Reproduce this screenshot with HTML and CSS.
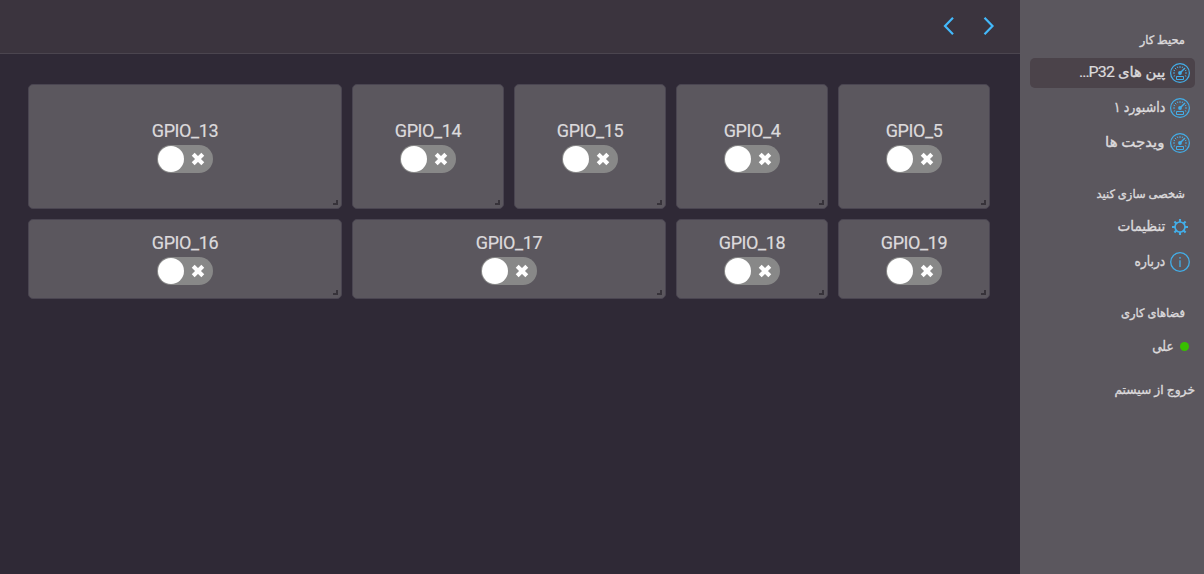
FILE: index.html
```html
<!DOCTYPE html>
<html lang="fa">
<head>
<meta charset="utf-8">
<title>داشبورد</title>
<link rel="stylesheet" href="styles.css">
</head>
<body>
<svg width="0" height="0" class="defs">
  <symbol id="gauge" viewBox="0 0 20 20">
    <g fill="none" stroke="currentColor">
      <circle cx="10" cy="10" r="9.4" stroke-width="1.2"/>
      <path d="M3 10h2M17 10h-2M10 3v2M5 5l1.3 1.3M3.7 13.2l1.4-.5M16.3 13.2l-1.4-.5M3.6 7.2l1.4.6M16.4 7.2l-1.4.6M7.3 3.6l.6 1.4M12.7 3.6l-.6 1.4" stroke-width="1"/>
      <path d="M10.5 9.5L15 5" stroke-width="1.5"/>
      <path d="M6.5 13.5h7v3h-7z" stroke-width="1"/>
    </g>
    <circle cx="10" cy="10" r="1.9" fill="currentColor"/>
  </symbol>
  <symbol id="gear" viewBox="0 0 20 20">
    <circle cx="10" cy="10" r="5" fill="none" stroke="currentColor" stroke-width="1.7"/>
    <path d="M10 2v3M10 15v3M2 10h3M15 10h3M4.4 4.4l2 2M13.6 13.6l2 2M4.4 15.6l2-2M13.6 6.4l2-2" stroke="currentColor" stroke-width="2.1"/>
  </symbol>
  <symbol id="info" viewBox="0 0 20 20">
    <circle cx="10" cy="10" r="9.3" fill="none" stroke="currentColor" stroke-width="1.3"/>
    <path d="M10 5v1.7M10 8.2v6.8" stroke="currentColor" stroke-width="1.3"/>
  </symbol>
  <symbol id="cross" viewBox="0 0 14 14">
    <path d="M2.2 2.2l9.6 9.6M11.8 2.2l-9.6 9.6" stroke="currentColor" stroke-width="4.1"/>
  </symbol>
</svg>
<div class="app">
  <main class="main">
    <header class="topbar">
      <svg class="arrow" viewBox="0 0 20 20"><path d="M14 1.8L6 10l8 8.2"/></svg>
      <svg class="arrow" viewBox="0 0 20 20"><path d="M5.5 1.8l8 8.2-8 8.2"/></svg>
    </header>
    <section class="grid">
      <article class="card wide"><h3>GPIO_13</h3><div class="switch"><svg><use href="#cross"/></svg></div></article>
      <article class="card"><h3>GPIO_14</h3><div class="switch"><svg><use href="#cross"/></svg></div></article>
      <article class="card"><h3>GPIO_15</h3><div class="switch"><svg><use href="#cross"/></svg></div></article>
      <article class="card"><h3>GPIO_4</h3><div class="switch"><svg><use href="#cross"/></svg></div></article>
      <article class="card"><h3>GPIO_5</h3><div class="switch"><svg><use href="#cross"/></svg></div></article>
      <article class="card wide"><h3>GPIO_16</h3><div class="switch"><svg><use href="#cross"/></svg></div></article>
      <article class="card wide"><h3>GPIO_17</h3><div class="switch"><svg><use href="#cross"/></svg></div></article>
      <article class="card"><h3>GPIO_18</h3><div class="switch"><svg><use href="#cross"/></svg></div></article>
      <article class="card"><h3>GPIO_19</h3><div class="switch"><svg><use href="#cross"/></svg></div></article>
    </section>
  </main>
  <aside class="sidebar" dir="rtl">
    <h2 class="title">محیط کار</h2>
    <nav class="menu">
      <a class="item active"><svg><use href="#gauge"/></svg><span class="pins">پین های <span class="latin">P32<span class="dots">...</span></span></span></a>
      <a class="item"><svg><use href="#gauge"/></svg><span class="board">داشبورد ۱</span></a>
      <a class="item"><svg><use href="#gauge"/></svg><span class="widgets">ویدجت ها</span></a>
    </nav>
    <h2 class="title second">شخصی سازی کنید</h2>
    <nav class="menu">
      <a class="item"><svg><use href="#gear"/></svg><span class="settings">تنظیمات</span></a>
      <a class="item"><svg><use href="#info"/></svg><span class="about">درباره</span></a>
    </nav>
    <h2 class="title third">فضاهای کاری</h2>
    <div class="item user"><i class="dot"></i><span class="about">علی</span></div>
    <a class="logout">خروج از سیستم</a>
  </aside>
</div>
</body>
</html>
```
FILE: styles.css
```css
* { box-sizing: border-box; }
body { margin: 0; font-family: Roboto, "DejaVu Sans", sans-serif; color: #dcdadc; background: #2f2936; }
.defs { display: block; position: absolute; }
.app { display: flex; height: 574px; }
.main { flex: 1; background: #2f2936; }
.topbar { height: 54px; background: #3b343e; border-bottom: 1px solid #4b454f; display: flex; justify-content: flex-end; align-items: center; gap: 20px; padding: 0 21px 1px 0; }
.arrow { width: 20px; height: 20px; fill: none; stroke: #43b9fb; stroke-width: 2.2; }
.grid { display: grid; grid-template-columns: repeat(6, 152px); grid-template-rows: 125px 80px; gap: 10px; padding: 30px 0 0 28px; }
.card { position: relative; display: flex; flex-direction: column; align-items: center; justify-content: center; padding-bottom: 2px; background: #5b575e; border: 1px solid #4a4551; border-radius: 5px; }
.wide { grid-column: span 2; }
.card::after { content: ""; box-sizing: border-box; position: absolute; right: 3px; bottom: 3px; width: 5px; height: 5px; border: solid #37333a; border-width: 0 2px 2px 0; }
.card h3 { margin: 0 0 2px; font-size: 18px; line-height: 24px; font-weight: 400; letter-spacing: -.4px; -webkit-text-stroke: .2px currentColor; }
.switch { width: 56px; height: 28px; padding: 1px 8px 1px 1px; border-radius: 14px; background: #888; display: flex; align-items: center; justify-content: space-between; }
.switch::before { content: ""; width: 26px; height: 26px; border-radius: 50%; background: #fff; }
.switch svg { width: 14px; height: 14px; color: #fff; }
.sidebar { width: 184px; background: #5b575e; padding: 30px 9px 0 10px; -webkit-text-stroke: .35px currentColor; }
.title { margin: 0 10px 8px 0; height: 20px; line-height: 20px; font-size: 11.5px; font-weight: 400; white-space: nowrap; }
.second { margin-top: 26px; }
.third { margin-top: 26px; }
.menu { display: flex; flex-direction: column; gap: 5px; }
.item { display: flex; align-items: center; gap: 5px; height: 30px; padding: 0 5px; border-radius: 5px; font-size: 14px; line-height: 28px; white-space: nowrap; }
.item > span { padding-bottom: 2px; transform-origin: right center; }
.pins { transform: scaleX(1.06); }
.board { transform: scaleX(.9); }
.widgets { transform: scaleX(1.07); }
.settings { transform: scaleX(.97); }
.about { transform: scaleX(.87); }
.active { background: #4b434a; }
.item svg { width: 20px; height: 20px; color: #43aee8; }
.latin { font-size: 15px; letter-spacing: -.7px; -webkit-text-stroke: .2px currentColor; }
.dots { letter-spacing: -1px; }
.dot { width: 9px; height: 9px; border-radius: 50%; background: #38bf00; }
.user { gap: 6px; padding: 0 6px; height: 31px; }
.logout { display: block; margin-top: 18px; height: 20px; font-size: 12.3px; line-height: 20px; white-space: nowrap; }
```
